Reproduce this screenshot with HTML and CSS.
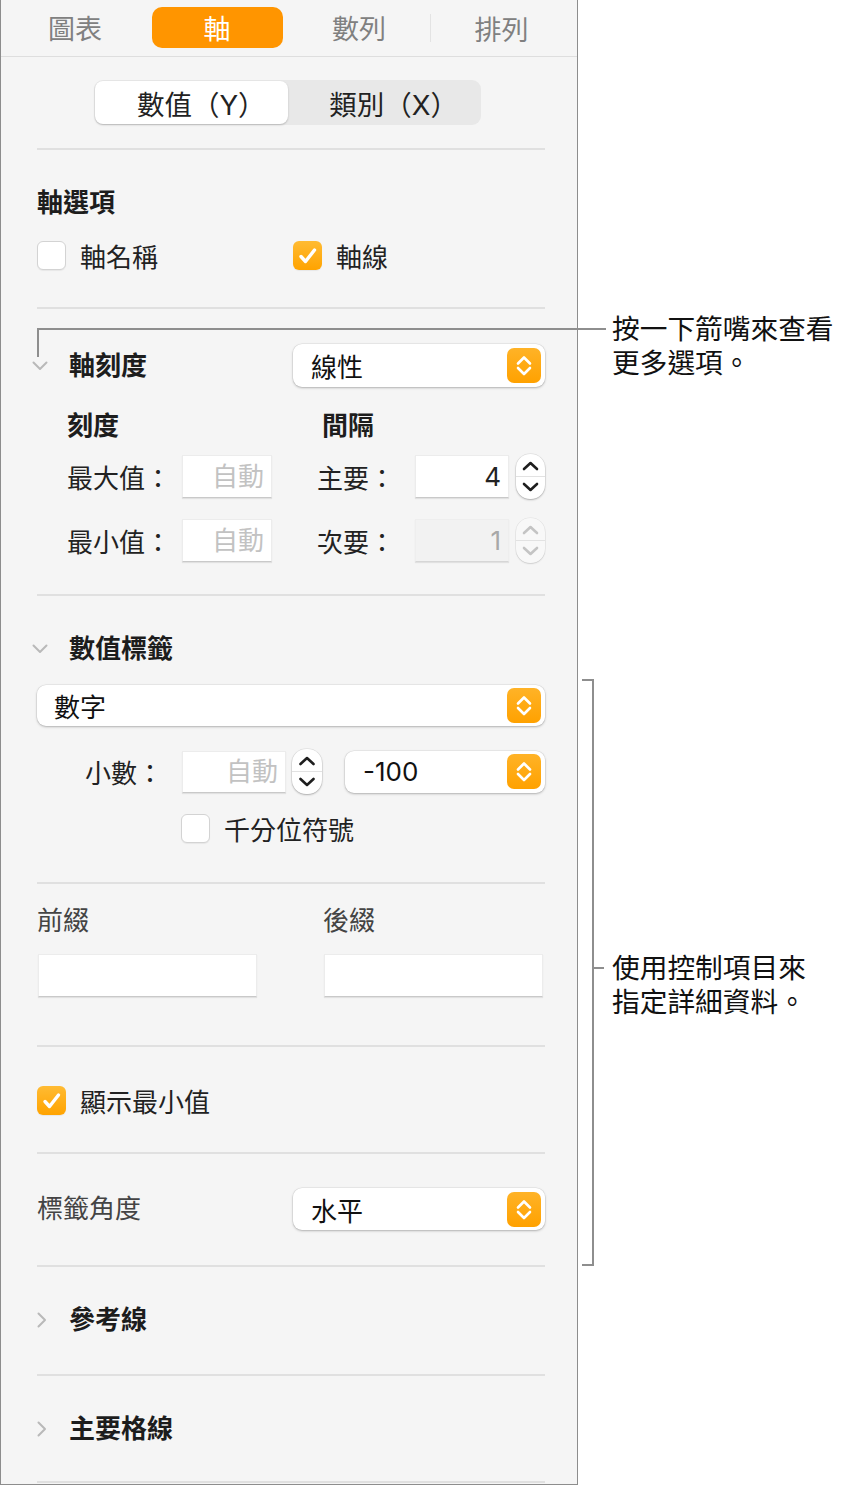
FILE: index.html
```html
<!DOCTYPE html>
<html lang="zh-Hant">
<head>
    <meta charset="UTF-8">
    <title>軸 - 格式設定</title>
    <link rel="stylesheet" href="styles.css">
</head>
<body>
    <div class="page">
        <aside class="panel">
            <nav class="tabs">
                <div class="tab">圖表</div>
                <div class="tab active"><span>軸</span></div>
                <div class="tab">數列</div>
                <div class="tab split">排列</div>
            </nav>

            <div class="panel-body">
                <div class="segmented">
                    <div class="seg selected">數值（Y）</div>
                    <div class="seg">類別（X）</div>
                </div>

                <!-- 軸選項 -->
                <section class="group group-options">
                    <h3 class="heading">軸選項</h3>
                    <div class="check-row">
                        <label class="check"><span class="box"></span>軸名稱</label>
                        <label class="check"><span class="box on"><svg viewBox="0 0 29 29"><path d="M8 15.5l4.5 5L21.5 9"/></svg></span>軸線</label>
                    </div>
                </section>

                <!-- 軸刻度 -->
                <section class="group group-scale">
                    <div class="disclosure">
                        <svg class="chev down" viewBox="0 0 16 10"><path d="M1.5 1.5L8 8l6.5-6.5"/></svg>
                        <h3 class="heading">軸刻度</h3>
                        <div class="popup popup-half">線性<span class="popup-btn"><svg viewBox="0 0 34 35"><path d="M11 15.5l6-6 6 6M11 20l6 6 6-6"/></svg></span></div>
                    </div>
                    <div class="sub-head">
                        <h4>刻度</h4>
                        <h4>間隔</h4>
                    </div>
                    <div class="field-row">
                        <span class="lbl">最大值：</span>
                        <input class="field" placeholder="自動" readonly>
                        <span class="lbl second">主要：</span>
                        <input class="field" value="4" readonly>
                        <div class="stepper"><svg viewBox="0 0 29 45"><path d="M8 15l6.5-6 6.5 6M8 30l6.5 6 6.5-6"/></svg></div>
                    </div>
                    <div class="field-row">
                        <span class="lbl">最小值：</span>
                        <input class="field" placeholder="自動" readonly>
                        <span class="lbl second">次要：</span>
                        <input class="field off" value="1" disabled>
                        <div class="stepper off"><svg viewBox="0 0 29 45"><path d="M8 15l6.5-6 6.5 6M8 30l6.5 6 6.5-6"/></svg></div>
                    </div>
                </section>

                <!-- 數值標籤 -->
                <section class="group group-labels">
                    <div class="disclosure">
                        <svg class="chev down" viewBox="0 0 16 10"><path d="M1.5 1.5L8 8l6.5-6.5"/></svg>
                        <h3 class="heading">數值標籤</h3>
                    </div>
                    <div class="popup popup-full">數字<span class="popup-btn"><svg viewBox="0 0 34 35"><path d="M11 15.5l6-6 6 6M11 20l6 6 6-6"/></svg></span></div>
                    <div class="decimal-row">
                        <span class="lbl">小數：</span>
                        <input class="field" placeholder="自動" readonly>
                        <div class="stepper"><svg viewBox="0 0 30 45"><path d="M8.5 15l6.5-6 6.5 6M8.5 30l6.5 6 6.5-6"/></svg></div>
                        <div class="popup">-100<span class="popup-btn"><svg viewBox="0 0 34 35"><path d="M11 15.5l6-6 6 6M11 20l6 6 6-6"/></svg></span></div>
                    </div>
                    <label class="check thousands"><span class="box"></span>千分位符號</label>
                </section>

                <!-- 前綴 / 後綴 -->
                <section class="group group-affix">
                    <div class="affix">
                        <span class="plain">前綴</span>
                        <input class="field wide" readonly>
                    </div>
                    <div class="affix">
                        <span class="plain">後綴</span>
                        <input class="field wide" readonly>
                    </div>
                </section>

                <section class="group group-min">
                    <label class="check"><span class="box on"><svg viewBox="0 0 29 29"><path d="M8 15.5l4.5 5L21.5 9"/></svg></span>顯示最小值</label>
                </section>

                <section class="group group-angle">
                    <div class="angle-row">
                        <span class="plain">標籤角度</span>
                        <div class="popup popup-half">水平<span class="popup-btn"><svg viewBox="0 0 34 35"><path d="M11 15.5l6-6 6 6M11 20l6 6 6-6"/></svg></span></div>
                    </div>
                </section>

                <section class="group group-closed">
                    <div class="disclosure">
                        <svg class="chev right" viewBox="0 0 10 16"><path d="M1.5 1.5L8 8l-6.5 6.5"/></svg>
                        <h3 class="heading">參考線</h3>
                    </div>
                </section>

                <section class="group group-closed last">
                    <div class="disclosure">
                        <svg class="chev right" viewBox="0 0 10 16"><path d="M1.5 1.5L8 8l-6.5 6.5"/></svg>
                        <h3 class="heading">主要格線</h3>
                    </div>
                </section>
            </div>
        </aside>

        <!-- callouts -->
        <div class="leader leader-top"></div>
        <p class="note note-top">按一下箭嘴來查看<br>更多選項。</p>
        <div class="bracket"></div>
        <div class="bracket-tick"></div>
        <p class="note note-mid">使用控制項目來<br>指定詳細資料。</p>
    </div>
</body>
</html>
```

FILE: styles.css
```css
* {
    box-sizing: border-box;
}
body {
    margin: 0;
    background: #fff;
    font-family: Inter, "Noto Sans CJK TC", sans-serif;
    color: #222;
}
.page {
    position: relative;
    width: 846px;
    height: 1485px;
}
.panel {
    width: 578px;
    min-height: 1485px;
    background: #f5f5f5;
    border: 1px solid #8d8d8d;
    border-top: none;
}

/* tabs */
.tabs {
    display: grid;
    grid-template-columns: repeat(4, 142px);
    padding-left: 3px;
    height: 57px;
    border-bottom: 1px solid #dedede;
    align-items: start;
}
.tab {
    height: 41px;
    margin-top: 7px;
    display: flex;
    align-items: center;
    justify-content: center;
    font-size: 27px;
    color: #808080;
}
.tab.active span {
    width: 131px;
    height: 41px;
    border-radius: 10px;
    background: #ff9500;
    color: #fff;
    display: flex;
    align-items: center;
    justify-content: center;
}
.tab.split {
    height: 28px;
    margin-top: 14px;
    border-left: 1px solid #e3e3e3;
}

.panel-body {
    padding: 0 32px 0 36px;
}

/* segmented control */
.segmented {
    display: flex;
    width: 387px;
    height: 45px;
    margin: 23px 0 0 57px;
    padding: 1px;
    background: #e8e8e8;
    border-radius: 9px;
}
.seg {
    flex: 1;
    display: flex;
    align-items: center;
    justify-content: center;
    padding-left: 20px;
    font-size: 27.5px;
    color: #222;
}
.seg.selected {
    background: #fff;
    border-radius: 8px;
    box-shadow: 0 1px 2px rgba(0,0,0,0.22);
}

/* groups */
.group {
    border-top: 2px solid #e0e0e0;
}
.group.last {
    border-bottom: 2px solid #e0e0e0;
}
.group-options { margin-top: 23px; padding: 38px 0 37px; }
.group-scale { padding: 35px 0 33px; }
.group-labels { padding: 38px 0 39px; }
.group-affix { padding: 22px 0 48px; display: grid; grid-template-columns: 286px 1fr; }
.group-min { padding: 39px 0 37px; }
.group-angle { padding: 34px 0 35px; }
.group-closed { padding: 38px 0 39px; }
.group-closed.last { padding-bottom: 37px; }

.heading {
    margin: 0;
    font-size: 26px;
    font-weight: 600;
    line-height: 30px;
    color: #1d1d1d;
}
.plain {
    display: block;
    font-size: 26px;
    line-height: 30px;
    color: #444;
}
.lbl {
    font-size: 26px;
    color: #222;
}
.lbl.second {
    padding-left: 45px;
}

/* checkboxes */
.check-row {
    display: grid;
    grid-template-columns: 256px auto;
    margin-top: 23px;
}
.check {
    display: flex;
    align-items: center;
    gap: 14px;
    height: 29px;
    font-size: 26px;
    color: #222;
}
.box {
    width: 29px;
    height: 29px;
    border-radius: 6px;
    background: #fff;
    border: 1px solid #d3d3d3;
    box-shadow: 0 1px 1px rgba(0,0,0,0.06);
}
.box.on {
    border: none;
    background: linear-gradient(#ffbb33, #ffa300);
}
.box svg {
    display: block;
    width: 29px;
    height: 29px;
    fill: none;
    stroke: #fff;
    stroke-width: 3.4;
    stroke-linecap: round;
    stroke-linejoin: round;
}
.thousands {
    margin: 23px 0 0 144px;
}

/* disclosure headers */
.disclosure {
    display: flex;
    align-items: center;
    height: 30px;
}
.group-scale .disclosure {
    height: 43px;
}
.chev {
    fill: none;
    stroke: #b9b9b9;
    stroke-width: 2;
    stroke-linecap: round;
    stroke-linejoin: round;
}
.chev.down {
    width: 16px;
    height: 10px;
    margin: 0 21px 0 -5px;
}
.chev.right {
    width: 10px;
    height: 16px;
    margin: 0 22px 0 0;
}

/* popup buttons */
.popup {
    position: relative;
    height: 42px;
    padding-left: 18px;
    display: flex;
    align-items: center;
    font-size: 26px;
    color: #111;
    background: #fff;
    border-radius: 9px;
    box-shadow: 0 0 0 0.5px rgba(0,0,0,0.08), 0 1px 2.5px rgba(0,0,0,0.25);
}
.popup-half {
    width: 252px;
    margin-left: auto;
}
.disclosure .popup {
    height: 43px;
}
.popup-full {
    margin-top: 21px;
    height: 41px;
    padding-left: 17px;
}
.popup-btn {
    position: absolute;
    right: 4px;
    top: 50%;
    width: 34px;
    height: 35px;
    margin-top: -17.5px;
    border-radius: 7px;
    background: linear-gradient(#ffb327, #ffa100);
}
.popup-btn svg {
    display: block;
    width: 34px;
    height: 35px;
    fill: none;
    stroke: #fff;
    stroke-width: 2.6;
    stroke-linecap: round;
    stroke-linejoin: round;
}

/* scale section */
.sub-head {
    display: grid;
    grid-template-columns: 255px auto;
    padding-left: 30px;
    margin-top: 24px;
}
.sub-head h4 {
    margin: 0;
    font-size: 26px;
    font-weight: 600;
    line-height: 30px;
    color: #1d1d1d;
}
.field-row {
    display: grid;
    grid-template-columns: 115px 90px 143px 94px 36px;
    align-items: center;
    padding-left: 30px;
    height: 43px;
    margin-top: 13px;
}
.field-row + .field-row {
    margin-top: 21px;
}
.field-row .stepper {
    margin-left: 7px;
}
.field {
    width: 100%;
    height: 43px;
    padding: 0 7px 0 0;
    font: inherit;
    font-size: 26px;
    text-align: right;
    color: #222;
    background: #fff;
    border: 1px solid #ececec;
    border-bottom-color: #c9c9c9;
    border-radius: 0;
    box-shadow: 0 1px 1px rgba(0,0,0,0.08);
    outline: none;
}
.field::placeholder {
    color: #c2c2c2;
}
.field.off {
    background: #f2f2f2;
    color: #a8a8a8;
    border-color: #eeeeee;
    border-bottom-color: #d6d6d6;
}
.stepper {
    width: 29px;
    height: 45px;
    border-radius: 14px;
    background: #fff;
    box-shadow: 0 0 0 0.5px rgba(0,0,0,0.1), 0 1px 2px rgba(0,0,0,0.25);
    background-image: linear-gradient(transparent 22px, #e2e2e2 22px, #e2e2e2 23px, transparent 23px);
}
.stepper svg {
    display: block;
    width: 100%;
    height: 45px;
    fill: none;
    stroke: #1e1e1e;
    stroke-width: 2.6;
    stroke-linecap: round;
    stroke-linejoin: round;
}
.stepper.off {
    background-color: #f8f8f8;
    box-shadow: 0 0 0 0.5px rgba(0,0,0,0.08), 0 1px 1.5px rgba(0,0,0,0.12);
}
.stepper.off svg {
    stroke: #c4c4c4;
}

/* decimal row */
.decimal-row {
    display: grid;
    grid-template-columns: 97px 104px 36px 223px;
    align-items: center;
    padding-left: 48px;
    height: 42px;
    margin-top: 23px;
}
.decimal-row .field {
    height: 42px;
}
.decimal-row .stepper {
    margin-left: 6px;
    width: 30px;
}
.decimal-row .popup {
    margin-left: 23px;
}

/* prefix / suffix */
.affix .field.wide {
    width: 219px;
    height: 43px;
    margin: 18px 0 0 1px;
    display: block;
}

.angle-row {
    display: flex;
    align-items: center;
    height: 42px;
}

/* callout annotations */
.leader-top {
    position: absolute;
    left: 37px;
    top: 328px;
    width: 569px;
    height: 29px;
    border-top: 2px solid #8e8e8e;
    border-left: 2px solid #8e8e8e;
}
.bracket {
    position: absolute;
    left: 582px;
    top: 679px;
    width: 12px;
    height: 587px;
    border: 2px solid #8e8e8e;
    border-left: none;
}
.bracket-tick {
    position: absolute;
    left: 593px;
    top: 967px;
    width: 11px;
    height: 2px;
    background: #8e8e8e;
}
.note {
    position: absolute;
    left: 612px;
    margin: 0;
    font-size: 27.7px;
    line-height: 34px;
    color: #111;
}
.note-top { top: 312px; }
.note-mid { top: 951px; }
```
